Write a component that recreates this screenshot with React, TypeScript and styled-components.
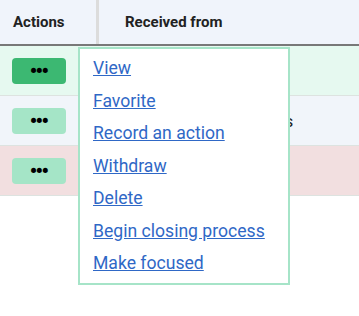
import React from 'react';
import styled, { createGlobalStyle } from 'styled-components';

const GlobalStyle = createGlobalStyle`
  html, body {
    margin: 0;
    min-height: 316px;
    background: #ffffff;
    font-family: Roboto, "Liberation Sans", sans-serif;
  }
`;

type RowTone = 'green' | 'blue' | 'red';

const rowColors: Record<RowTone, string> = {
  green: '#e6f9f0',
  blue: '#f1f5fa',
  red: '#f2dfe0',
};

const rows: { tone: RowTone; from: string; active?: boolean }[] = [
  { tone: 'green', from: '', active: true },
  { tone: 'blue', from: 'Greenfield, Associates' },
  { tone: 'red', from: '' },
];

const menuItems = [
  'View',
  'Favorite',
  'Record an action',
  'Withdraw',
  'Delete',
  'Begin closing process',
  'Make focused',
];

const App = () => {
  return (
    <>
      <GlobalStyle />
      <Table>
        <HeaderRow>
          <ActionsHead>Actions</ActionsHead>
          <FromHead>Received from</FromHead>
        </HeaderRow>
        {rows.map((row, i) => (
          <Row key={i} tone={row.tone}>
            <ActionsCell>
              <DotsButton active={row.active}>•••</DotsButton>
            </ActionsCell>
            <FromCell>{row.from}</FromCell>
          </Row>
        ))}
        <Menu>
          {menuItems.map((item) => (
            <MenuLink key={item} href="#">
              {item}
            </MenuLink>
          ))}
        </Menu>
      </Table>
    </>
  );
};

export default App;

const Table = styled.div`
  position: relative;
  width: 359px;
  height: 316px;
`;

const HeaderRow = styled.div`
  display: flex;
  height: 44px;
  background: #f0f4fb;
  border-bottom: 2px solid #787878;
  font-size: 15px;
  font-weight: 700;
  color: #222;
`;

const ActionsHead = styled.div`
  width: 99px;
  box-sizing: border-box;
  padding-left: 13px;
  display: flex;
  align-items: center;
  border-right: 3px solid #dcdcdc;
`;

const FromHead = styled.div`
  flex: 1;
  padding-left: 26px;
  display: flex;
  align-items: center;
`;

const Row = styled.div<{ tone: RowTone }>`
  display: flex;
  height: 49px;
  background: ${(p) => rowColors[p.tone]};
  border-bottom: 1px solid #dde3e0;
`;

const ActionsCell = styled.div`
  width: 99px;
  box-sizing: border-box;
  padding-left: 12px;
  display: flex;
  align-items: center;
`;

const FromCell = styled.div`
  flex: 1;
  padding-left: 26px;
  display: flex;
  align-items: center;
  font-size: 17px;
  color: #222;
  white-space: nowrap;
`;

const DotsButton = styled.button<{ active?: boolean }>`
  width: 54px;
  height: 26px;
  border: none;
  border-radius: 4px;
  background: ${(p) => (p.active ? '#3cb872' : '#a5e5c7')};
  color: #000;
  font-size: 20px;
  font-weight: 900;
  letter-spacing: -1.5px;
  line-height: 26px;
  font-family: Roboto, "Liberation Sans", sans-serif;
  padding: 0 1px 0 0;
`;

const Menu = styled.div`
  position: absolute;
  left: 78px;
  top: 47px;
  width: 212px;
  height: 238px;
  box-sizing: border-box;
  background: #fff;
  border: 2px solid #a6e4c8;
  padding: 3px 0 0 13px;
  display: flex;
  flex-direction: column;
`;

const MenuLink = styled.a`
  font-size: 17.6px;
  line-height: 32.5px;
  color: #2f68c6;
  text-decoration: underline;
  align-self: flex-start;
`;
